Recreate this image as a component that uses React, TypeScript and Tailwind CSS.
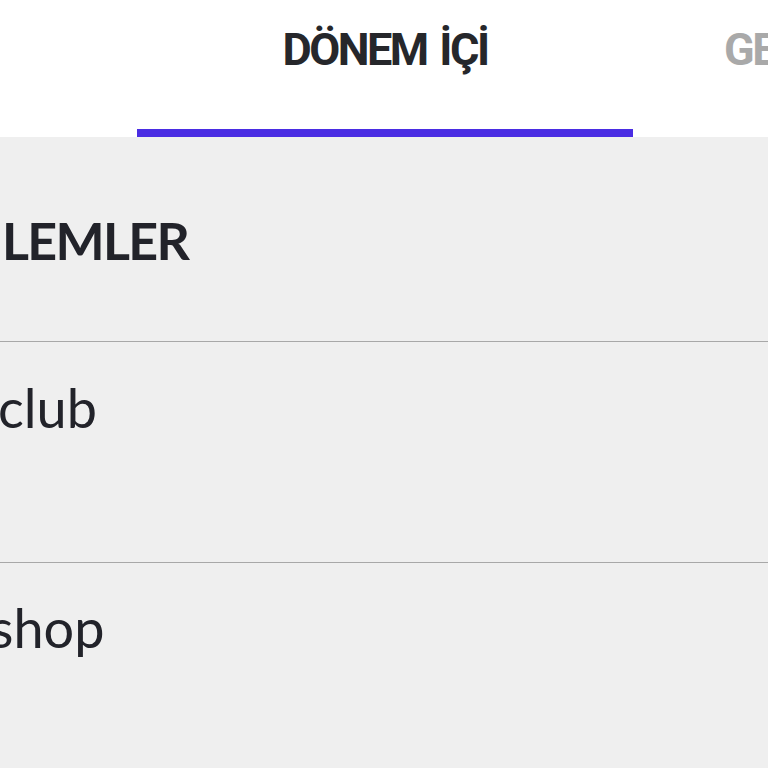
import React from "react";

export default function App() {
  return (
    <div className="w-[768px] h-[768px] overflow-hidden bg-[#efefef]">
      <div className="h-[137px] bg-white relative flex pl-[137px] overflow-hidden">
        <div className="w-[496px] shrink-0 relative flex justify-center">
          <span className="mt-[27px] text-[45px] leading-[45px] font-bold text-[#26272b] font-['Roboto',sans-serif] tracking-[-2.5px] [word-spacing:4px]">
            DÖNEM İÇİ
          </span>
          <div className="absolute left-0 right-0 bottom-0 h-[8px] bg-[#4a2de3]" />
        </div>
        <div className="shrink-0 pl-[91px]">
          <span className="mt-[27px] block text-[45px] leading-[45px] font-bold text-[#a9a9a9] font-['Roboto',sans-serif] tracking-[-2.5px] whitespace-nowrap">
            GEÇMİŞ
          </span>
        </div>
      </div>
      <div className="h-[205px] border-b border-[#a8a8a8] pt-[77px] pl-[2px]">
        <span className="text-[52px] leading-[52px] font-bold text-[#22232a] font-['Lato',sans-serif] tracking-[-1.7px]">
          LEMLER
        </span>
      </div>
      <div className="h-[221px] border-b border-[#a8a8a8] pt-[39px]">
        <span className="block -ml-[2px] text-[54px] leading-[54px] text-[#22232a] font-['Lato',sans-serif]">
          club
        </span>
      </div>
      <div className="pt-[38px]">
        <span className="block -ml-[10px] text-[54px] leading-[54px] text-[#22232a] font-['Lato',sans-serif]">
          shop
        </span>
      </div>
    </div>
  );
}
